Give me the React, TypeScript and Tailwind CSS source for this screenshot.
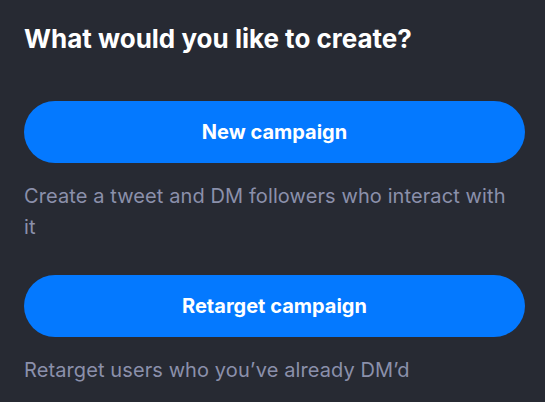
import React from 'react';

const options = [
	{ label: 'New campaign', description: 'Create a tweet and DM followers who interact with it' },
	{ label: 'Retarget campaign', description: 'Retarget users who you\u2019ve already DM\u2019d' },
];

const App: React.FC = () => {
	return (
		<div className="min-h-[402px] bg-[#272a33] pl-6 pr-5 pt-[22px] font-['Inter',sans-serif]">
			<h2 className="text-[26px] font-bold leading-[34px] text-white">What would you like to create?</h2>
			<div className="mt-[45px] flex flex-col">
				{options.map((opt, idx) => (
					<div key={idx} className={idx > 0 ? 'mt-[32px]' : ''}>
						<button className="flex h-[62px] w-full items-center justify-center rounded-full bg-[#0479ff] text-[20px] font-bold text-white">
							{opt.label}
						</button>
						<p className="mt-[18px] max-w-[485px] text-[20px] leading-[31px] tracking-[0.1px] text-[#8b90ab]">
							{opt.description}
						</p>
					</div>
				))}
			</div>
		</div>
	);
};

export default App;
